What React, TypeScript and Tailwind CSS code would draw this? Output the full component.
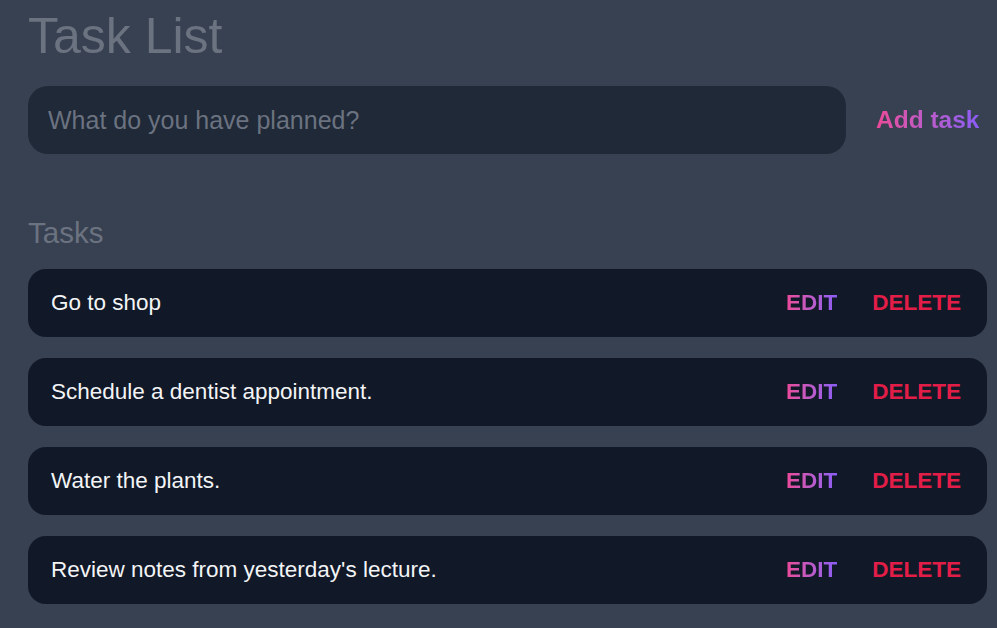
import React, { useState } from "react";

// Task list page: title, new-task input, list of tasks with edit/delete actions.

interface Task {
  id: number;
  text: string;
}

const initialTasks: Task[] = [
  { id: 1, text: "Go to shop" },
  { id: 2, text: "Schedule a dentist appointment." },
  { id: 3, text: "Water the plants." },
  { id: 4, text: "Review notes from yesterday's lecture." },
];

const gradientText =
  "bg-gradient-to-r from-[#ec4899] to-[#8b5cf6] bg-clip-text text-transparent";

function TaskRow({ task, onDelete }: { task: Task; onDelete: (id: number) => void }) {
  return (
    <li className="flex h-[68px] items-center rounded-[18px] bg-[#111827] pl-[23px] pr-[26px]">
      <span className="flex-1 text-[22.5px] text-[#f3f4f6]">{task.text}</span>
      <button className={`text-[22.5px] font-bold uppercase ${gradientText}`}>Edit</button>
      <button
        onClick={() => onDelete(task.id)}
        className="ml-[35px] text-[22.5px] font-bold uppercase text-[#e11d48]"
      >
        Delete
      </button>
    </li>
  );
}

export default function App() {
  const [tasks, setTasks] = useState<Task[]>(initialTasks);
  const [draft, setDraft] = useState("");

  const addTask = (e: React.FormEvent) => {
    e.preventDefault();
    if (!draft.trim()) return;
    setTasks((prev) => [...prev, { id: Date.now(), text: draft.trim() }]);
    setDraft("");
  };

  const removeTask = (id: number) => {
    setTasks((prev) => prev.filter((t) => t.id !== id));
  };

  return (
    <div
      className="min-h-screen bg-[#374151] pl-[28px] pr-[10px] pt-[11px] pb-10"
      style={{ fontFamily: '"Liberation Sans", Arial, sans-serif' }}
    >
      <h1 className="text-[50px] leading-[50px] text-[#6b7280]">Task List</h1>

      <form onSubmit={addTask} className="mt-[25px] flex items-center">
        <input
          value={draft}
          onChange={(e) => setDraft(e.target.value)}
          placeholder="What do you have planned?"
          className="h-[68px] flex-1 rounded-[20px] bg-[#1f2937] px-[20px] text-[25px] text-gray-200 placeholder:text-[#6b7280] outline-none"
        />
        <button type="submit" className="ml-[30px] w-[111px] text-left text-[24.5px] font-bold">
          <span className={gradientText}>Add task</span>
        </button>
      </form>

      <h2 className="mt-[64px] text-[29.5px] leading-[30px] text-[#6b7280]">Tasks</h2>

      <ul className="mt-[21px] flex flex-col gap-[21px]">
        {tasks.map((task) => (
          <TaskRow key={task.id} task={task} onDelete={removeTask} />
        ))}
      </ul>
    </div>
  );
}
